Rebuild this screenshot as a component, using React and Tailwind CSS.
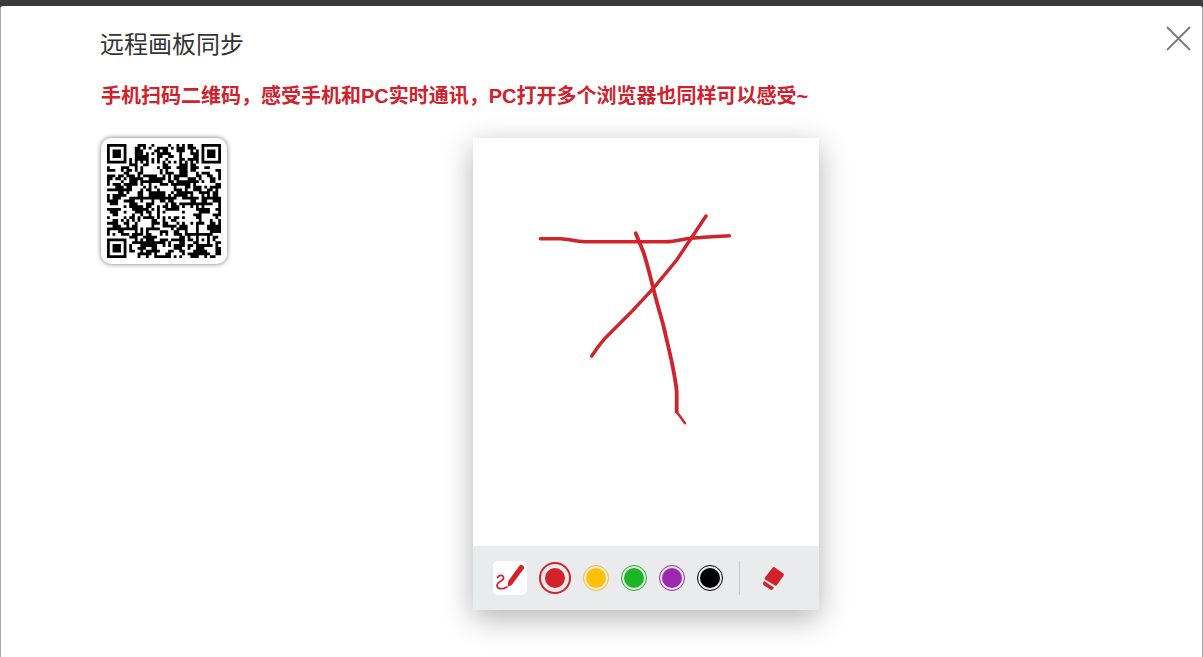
import React from "react";

const RED = "#d2232a";

function buildQr() {
  const n = 41;
  const g = Array.from({ length: n }, () => Array(n).fill(0));
  const fixed = Array.from({ length: n }, () => Array(n).fill(false));
  let s = 0x5a3c91;
  const rnd = () => {
    s ^= s << 13; s &= 0xffffffff;
    s ^= s >>> 17;
    s ^= s << 5; s &= 0xffffffff;
    return (s >>> 0) / 4294967296;
  };
  const finder = (ox, oy) => {
    for (let y = -1; y < 8; y++) for (let x = -1; x < 8; x++) {
      const px = ox + x, py = oy + y;
      if (px < 0 || py < 0 || px >= n || py >= n) continue;
      const inside = x >= 0 && x < 7 && y >= 0 && y < 7;
      const ring = x === 0 || x === 6 || y === 0 || y === 6;
      const core = x >= 2 && x <= 4 && y >= 2 && y <= 4;
      g[py][px] = inside && (ring || core) ? 1 : 0;
      fixed[py][px] = true;
    }
  };
  finder(0, 0); finder(34, 0); finder(0, 34);
  for (let y = -2; y <= 2; y++) for (let x = -2; x <= 2; x++) {
    const m = Math.max(Math.abs(x), Math.abs(y));
    g[34 + y][34 + x] = m === 1 ? 0 : 1;
    fixed[34 + y][34 + x] = true;
  }
  for (let i = 8; i < 33; i++) {
    g[6][i] = i % 2 === 0 ? 1 : 0; fixed[6][i] = true;
    g[i][6] = i % 2 === 0 ? 1 : 0; fixed[i][6] = true;
  }
  for (let y = 0; y < n; y++) for (let x = 0; x < n; x++) {
    if (fixed[y][x]) continue;
    const left = x > 0 ? g[y][x - 1] : 0;
    const up = y > 0 ? g[y - 1][x] : 0;
    g[y][x] = rnd() < 0.38 + 0.16 * left + 0.16 * up ? 1 : 0;
  }
  let d = "";
  g.forEach((row, y) => row.forEach((v, x) => { if (v) d += `M${x} ${y}h1v1h-1z`; }));
  return d;
}
const qrPath = buildQr();

function Dot({ ring, fill }) {
  return (
    <div className="w-[26px] h-[26px] rounded-full border flex items-center justify-center" style={{ borderColor: ring }}>
      <div className="w-[20px] h-[20px] rounded-full" style={{ backgroundColor: fill }} />
    </div>
  );
}

export default function App() {
  return (
    <div className="h-[657px] overflow-hidden bg-[#3c3c3c] pt-[6px]" style={{ fontFamily: '"Liberation Sans", "Noto Sans CJK SC", sans-serif' }}>
      <div className="relative h-[660px] bg-white rounded-[3px] border-x border-[#a8a8a8] pl-[99px]">
        <button className="absolute top-[19px] right-[11px] w-[26px] h-[26px] p-0">
          <svg viewBox="0 0 26 26" className="w-[26px] h-[26px] block" fill="none" stroke="#7a7a7a" strokeWidth="1.8">
            <path d="M2 2 L25 25 M25 2 L2 25" />
          </svg>
        </button>
        <h1 className="pt-[19px] text-[24px] leading-[36px] text-[#333] font-normal font-['Noto_Sans_CJK_SC'] tracking-normal">远程画板同步</h1>
        <p className="mt-[22px] ml-[1px] text-[20px] leading-[27px] font-bold text-[#d0212d]">手机扫码二维码，感受手机和PC实时通讯，PC打开多个浏览器也同样可以感受~</p>
        <div className="flex items-start mt-[28px]">
          <div className="ml-[1px] w-[126px] h-[126px] bg-white rounded-[10px] shadow-[0_0_5px_rgba(0,0,0,0.55)] flex items-center justify-center">
            <svg viewBox="0 0 41 41" className="w-[114px] h-[114px] block">
              <path d={qrPath} fill="#000" />
            </svg>
          </div>
          <div className="ml-[246px] w-[346px] h-[472px] flex flex-col bg-white shadow-[0_8px_28px_rgba(0,0,0,0.3)]">
            <div className="flex-1">
              <svg viewBox="0 0 346 408" className="block w-[346px] h-[408px]" fill="none" stroke={RED} strokeLinecap="round" strokeLinejoin="round">
                <path strokeWidth="3.6" d="M67.5 100.7 L88 100.7 C95 101 103 103.5 112 103.7 L193 103.7 C203 103.5 210 101 217 100.3 C230 99 245 98.5 256.3 97.7" />
                <path strokeWidth="3.4" d="M233 78 L217 102 L203.7 122 L180.3 150.3 L157 175.3 L135.3 197 C129 203 124 210 118.7 218" />
                <path strokeWidth="3.8" d="M162.7 95.3 L170.3 113.7 C174 125 177 137 180.3 150.3 C183 162 187 175 190.3 187 C193 199 196 211 198.7 223.7 C201 235 203 245 203.7 253.7 L203.7 273.7" />
                <path strokeWidth="2.4" d="M203.7 273.7 L212 285.3" />
              </svg>
            </div>
            <div className="h-[64px] bg-[#e9ebed] flex items-center pl-[20px]">
              <div className="w-[34px] h-[34px] bg-white rounded-[5px]">
                <svg viewBox="0 0 34 34" className="block w-[34px] h-[34px]" fill="none">
                  <path d="M27 4 C28.5 3.2 31.8 5.5 31 7.4 L18.7 24 L14.7 25.8 L15.3 20 Z" fill={RED} />
                  <path d="M4.5 16.5 C6 13.5 11 13.5 10.5 17.5 C10 20.5 4 20.5 4 24.5 C4 28.5 10 28.5 14 26" stroke={RED} strokeWidth="1.7" strokeLinecap="round" />
                </svg>
              </div>
              <div className="ml-[12px] w-[32px] h-[32px] rounded-full border-2 border-[#d2232a] flex items-center justify-center">
                <div className="w-[20px] h-[20px] rounded-full bg-[#d2232a]" />
              </div>
              <div className="ml-[12px] flex items-center gap-[12px]">
                <Dot ring="#ffc107" fill="#ffc107" />
                <Dot ring="#1cb523" fill="#1cb523" />
                <Dot ring="#9c27b0" fill="#9c27b0" />
                <Dot ring="#000000" fill="#000000" />
              </div>
              <div className="ml-[16px] w-px h-[34px] bg-[#c6c8ca]" />
              <svg viewBox="0 0 26 26" className="ml-[21px] block w-[26px] h-[26px]" fill={RED}>
                <path d="M11.7 2.6 C12.2 2 13 1.9 13.6 2.3 L22.4 8.6 C23 9 23.1 9.8 22.7 10.4 L15.8 20.2 C15.4 20.8 14.6 20.9 14 20.5 L4.2 14.4 C3.6 14 3.5 13.2 3.9 12.6 Z" />
                <path d="M3 16 L13 22.4 L11.6 24.6 C11.1 25.2 10.4 25.2 9.8 24.8 L3 20.6 C2 20 1.8 19 2.3 17.6 Z" />
              </svg>
            </div>
          </div>
        </div>
      </div>
    </div>
  );
}
